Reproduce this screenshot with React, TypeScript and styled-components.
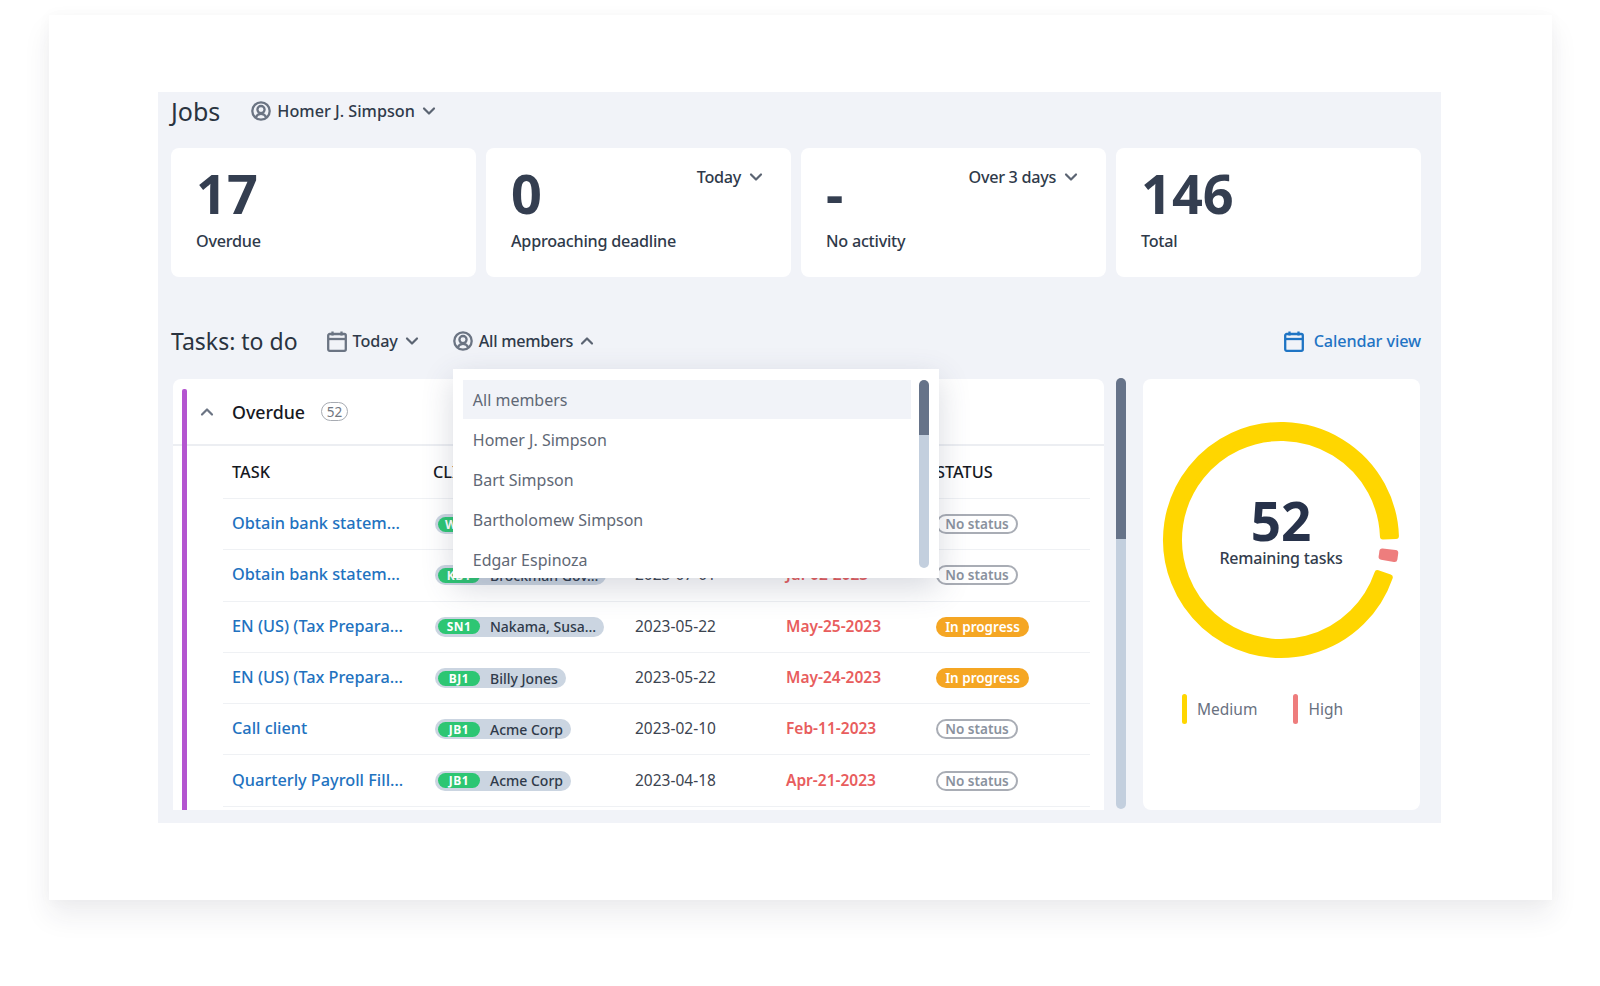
import styled, { createGlobalStyle } from 'styled-components'

const GlobalStyle = createGlobalStyle`
  html, body {
    margin: 0;
    padding: 0;
    background: #fff;
    font-family: "Noto Sans", "Open Sans", sans-serif;
  }
  * { box-sizing: border-box; }
`

const Page = styled.div`
  width: 1600px;
  height: 986px;
  padding: 15px 48px 86px 49px;
  overflow: hidden;
`

const Frame = styled.div`
  height: 885px;
  padding: 77px 111px 0 109px;
  background: #fff;
  box-shadow: 0 16px 26px rgba(40, 44, 60, 0.08), 0 0 14px rgba(40, 44, 60, 0.03);
`

const Panel = styled.div`
  height: 731px;
  padding: 0 20px 13px 13px;
  background: #f1f3f8;
  display: flex;
  flex-direction: column;
`

const JobsHeader = styled.div`
  height: 38px;
  margin-bottom: 18px;
  display: flex;
  align-items: center;
`

const Title = styled.h2<{ $size: number; $gap: number }>`
  margin: 0 ${p => p.$gap}px 0 0;
  font-size: ${p => p.$size}px;
  font-weight: 400;
  color: #2a3340;
`

const Filter = styled.div<{ $offset?: number; $spacing?: number }>`
  position: relative;
  height: 32px;
  margin-left: ${p => p.$offset ?? 0}px;
  display: flex;
  align-items: center;
  gap: 6px;
  font-size: 16.2px;
  letter-spacing: ${p => p.$spacing ?? 0}px;
  font-weight: 500;
  color: #2f3a4a;
  white-space: nowrap;
`

const StatRow = styled.div`
  display: grid;
  grid-template-columns: repeat(4, 305px);
  gap: 10px;
  height: 129px;
`

const StatCard = styled.div`
  position: relative;
  padding: 12px 25px 0;
  background: #fff;
  border-radius: 8px;
`

const StatValue = styled.div`
  height: 66px;
  font-size: 54px;
  line-height: 66px;
  font-weight: 700;
  color: #343e50;
`

const StatLabel = styled.div`
  margin-top: 3px;
  font-size: 16.2px;
  letter-spacing: -0.25px;
  line-height: 24px;
  font-weight: 500;
  color: #2f3a4a;
`

const StatSelect = styled.div`
  position: absolute;
  top: 17px;
  right: 27px;
  display: flex;
  align-items: center;
  gap: 7px;
  font-size: 16.2px;
  letter-spacing: -0.3px;
  line-height: 24px;
  font-weight: 500;
  color: #2f3a4a;
`

const TasksHeader = styled.div`
  height: 32px;
  margin: 48px 0 22px;
  display: flex;
  align-items: center;
`

const CalendarLink = styled.div`
  margin-left: auto;
  display: flex;
  align-items: center;
  gap: 10px;
  font-size: 16.2px;
  letter-spacing: -0.1px;
  font-weight: 500;
  color: #1f74c4;
`

const Content = styled.div`
  flex: 1;
  padding-left: 2px;
  display: flex;
`

const TableCard = styled.div`
  position: relative;
  width: 931px;
  height: 431px;
  background: #fff;
  border-radius: 8px 8px 0 0;
  overflow: hidden;
`

const AccentBar = styled.div`
  position: absolute;
  left: 9px;
  top: 10px;
  bottom: 0;
  width: 5px;
  background: #b455d0;
  border-radius: 2px 2px 0 0;
`

const SectionHead = styled.div`
  height: 67px;
  padding-left: 26px;
  display: flex;
  align-items: center;
  border-bottom: 2px solid #eceef2;
`

const SectionName = styled.div`
  margin-left: 17px;
  font-size: 17.8px;
  font-weight: 500;
  color: #16191f;
`

const CountBadge = styled.div`
  margin-left: 16px;
  width: 27px;
  height: 19px;
  border: 1px solid #a7abb2;
  border-radius: 10px;
  display: flex;
  align-items: center;
  justify-content: center;
  font-size: 13.5px;
  color: #6f7681;
`

const Table = styled.div`
  padding: 0 14px 0 50px;
`

const Row = styled.div<{ $head?: boolean }>`
  height: ${p => (p.$head ? '53px' : '51.3px')};
  padding-left: 9px;
  display: grid;
  grid-template-columns: 201px 202px 151px 150px 1fr;
  align-items: center;
  border-bottom: 1.5px solid #eff1f4;
`

const HeadCell = styled.div`
  font-size: 16.3px;
  font-weight: 500;
  color: #16191f;
`

const TaskLink = styled.div`
  padding-bottom: 2px;
  font-size: 16.3px;
  font-weight: 500;
  color: #2272bf;
  white-space: nowrap;
`

const ClientPill = styled.div`
  justify-self: start;
  margin-left: 2px;
  height: 20px;
  padding: 0 8px 0 3px;
  display: flex;
  align-items: center;
  gap: 10px;
  background: #cbd5e1;
  border-radius: 10px;
  font-size: 14px;
  font-weight: 500;
  color: #2f3a4a;
  white-space: nowrap;
`

const ClientTag = styled.span`
  width: 42px;
  height: 15px;
  display: flex;
  align-items: center;
  justify-content: center;
  background: #2dc673;
  border-radius: 8px;
  font-size: 12px;
  letter-spacing: 0.5px;
  font-weight: 700;
  color: #fff;
`

const DateCell = styled.div`
  padding-bottom: 2px;
  font-size: 15.5px;
  color: #3c4450;
`

const DueCell = styled.div`
  padding-bottom: 2px;
  font-size: 15.5px;
  font-weight: 600;
  color: #e85d5d;
`

const StatusPill = styled.div<{ $active?: boolean }>`
  justify-self: start;
  width: ${p => (p.$active ? '93px' : '82px')};
  height: 20px;
  display: flex;
  align-items: center;
  justify-content: center;
  border-radius: 10px;
  border: ${p => (p.$active ? 'none' : '2px solid #a9adb5')};
  background: ${p => (p.$active ? '#f5a623' : 'transparent')};
  font-size: 13.5px;
  font-weight: 600;
  color: ${p => (p.$active ? '#fff' : '#8a929e')};
`

const Track = styled.div<{ $height: number; $thumb: number }>`
  width: 10px;
  height: ${p => p.$height}px;
  flex-shrink: 0;
  border-radius: 5px;
  background: linear-gradient(
    #667389 ${p => p.$thumb}px,
    #c3cfde ${p => p.$thumb}px
  );
`

const MainScroll = styled.div`
  margin: -1px 17px 0 12px;
`

const ChartCard = styled.div`
  width: 277px;
  height: 431px;
  padding-top: 42px;
  background: #fff;
  border-radius: 8px;
  display: flex;
  flex-direction: column;
  align-items: center;
`

const Ring = styled.div`
  position: relative;
  width: 238px;
  height: 238px;
  margin-left: -1px;
`

const RingCenter = styled.div`
  position: absolute;
  inset: 74px 0 0;
  display: flex;
  flex-direction: column;
  align-items: center;
`

const RingValue = styled.div`
  font-size: 53px;
  line-height: 51px;
  font-weight: 700;
  color: #27324a;
`

const RingLabel = styled.div`
  font-size: 16px;
  letter-spacing: -0.2px;
  line-height: 24px;
  font-weight: 500;
  color: #333d4d;
`

const Legend = styled.div`
  margin-top: 35px;
  align-self: flex-start;
  padding-left: 39px;
  display: flex;
  gap: 36px;
`

const LegendItem = styled.div<{ $color: string }>`
  display: flex;
  align-items: center;
  gap: 10px;
  font-size: 15.5px;
  color: #69717f;

  &::before {
    content: '';
    width: 5px;
    height: 30px;
    border-radius: 3px;
    background: ${p => p.$color};
  }
`

const Dropdown = styled.div`
  position: absolute;
  left: 0;
  top: calc(100% + 12px);
  z-index: 5;
  width: 486px;
  height: 209px;
  padding: 11px 10px 10px;
  display: flex;
  gap: 8px;
  background: #fff;
  box-shadow: 0 10px 30px rgba(60, 70, 100, 0.2);
`

const OptionList = styled.div`
  width: 449px;
  height: 190px;
  overflow: hidden;
`

const Option = styled.div<{ $selected?: boolean }>`
  height: 39px;
  margin-bottom: 1px;
  padding-left: 10px;
  display: flex;
  align-items: center;
  font-size: 16px;
  letter-spacing: 0;
  font-weight: 400;
  color: #5f6875;
  background: ${p => (p.$selected ? '#f1f3f8' : 'transparent')};
`

const Chevron = ({ up, color = '#5b6472', size = 16 }: { up?: boolean; color?: string; size?: number }) => (
  <svg width={size} height={size} viewBox="0 0 16 16" fill="none">
    <path
      d={up ? 'M3 10.5 8 5.5l5 5' : 'M3 5.5l5 5 5-5'}
      stroke={color}
      strokeWidth="2.2"
      strokeLinecap="round"
      strokeLinejoin="round"
    />
  </svg>
)

const MemberIcon = () => (
  <svg width="20" height="20" viewBox="0 0 20 20" fill="none" stroke="#6b7483" strokeWidth="2.3">
    <circle cx="10" cy="10" r="8.7" />
    <circle cx="10" cy="8.6" r="3.6" />
    <path d="M4.6 16.4c1.2-2.4 3-3.6 5.4-3.6s4.2 1.2 5.4 3.6" />
  </svg>
)

const CalendarIcon = ({ color }: { color: string }) => (
  <svg width="20" height="21" viewBox="0 0 20 21" fill="none" stroke={color} strokeWidth="2.3">
    <rect x="1.2" y="3" width="17.6" height="16.8" rx="1.5" />
    <path d="M1 8h18" />
    <path d="M5.5 0.5v4M14.5 0.5v4" />
  </svg>
)

// annular sector, rounded off with a round-joined stroke
const polar = (r: number, deg: number) => {
  const a = (deg * Math.PI) / 180
  return `${(119 + r * Math.cos(a)).toFixed(2)} ${(119 + r * Math.sin(a)).toFixed(2)}`
}

const sector = (from: number, to: number) => {
  const large = to - from > 180 ? 1 : 0
  const outer = 115
  const inner = 102
  return `M${polar(outer, from)} A${outer} ${outer} 0 ${large} 1 ${polar(outer, to)} L${polar(inner, to)} A${inner} ${inner} 0 ${large} 0 ${polar(inner, from)} Z`
}

const RingArc = ({ from, to, color }: { from: number; to: number; color: string }) => (
  <path d={sector(from, to)} fill={color} stroke={color} strokeWidth="6" strokeLinejoin="round" />
)

type TTask = {
  name: string
  tag: string
  client: string
  date: string
  due: string
  active?: boolean
}

const tasks: TTask[] = [
  { name: 'Obtain bank statem…', tag: 'WB1', client: 'Wayne, Bruce', date: '2023-06-28', due: 'Jun-30-2023' },
  { name: 'Obtain bank statem…', tag: 'KB1', client: 'Brockman Gov…', date: '2023-07-01', due: 'Jul-02-2023' },
  { name: 'EN (US) (Tax Prepara…', tag: 'SN1', client: 'Nakama, Susa…', date: '2023-05-22', due: 'May-25-2023', active: true },
  { name: 'EN (US) (Tax Prepara…', tag: 'BJ1', client: 'Billy Jones', date: '2023-05-22', due: 'May-24-2023', active: true },
  { name: 'Call client', tag: 'JB1', client: 'Acme Corp', date: '2023-02-10', due: 'Feb-11-2023' },
  { name: 'Quarterly Payroll Fill…', tag: 'JB1', client: 'Acme Corp', date: '2023-04-18', due: 'Apr-21-2023' },
]

const members = ['All members', 'Homer J. Simpson', 'Bart Simpson', 'Bartholomew Simpson', 'Edgar Espinoza']

const stats = [
  { value: '17', label: 'Overdue' },
  { value: '0', label: 'Approaching deadline', select: 'Today' },
  { value: '-', label: 'No activity', select: 'Over 3 days' },
  { value: '146', label: 'Total' },
]

const App = () => {
  return (
    <Page>
      <GlobalStyle />
      <Frame>
        <Panel>
          <JobsHeader>
            <Title $size={25} $gap={31}>Jobs</Title>
            <Filter>
              <MemberIcon />
              Homer J. Simpson
              <Chevron />
            </Filter>
          </JobsHeader>

          <StatRow>
            {stats.map(stat => (
              <StatCard key={stat.label}>
                <StatValue>{stat.value}</StatValue>
                <StatLabel>{stat.label}</StatLabel>
                {stat.select && (
                  <StatSelect>
                    {stat.select}
                    <Chevron />
                  </StatSelect>
                )}
              </StatCard>
            ))}
          </StatRow>

          <TasksHeader>
            <Title $size={23} $gap={29}>Tasks: to do</Title>
            <Filter $spacing={-0.1}>
              <CalendarIcon color="#6b7483" />
              Today
              <Chevron />
            </Filter>
            <Filter $offset={33} $spacing={-0.3}>
              <MemberIcon />
              All members
              <Chevron up />
              <Dropdown>
                <OptionList>
                  {members.map((member, index) => (
                    <Option key={member} $selected={index === 0}>
                      {member}
                    </Option>
                  ))}
                </OptionList>
                <Track $height={188} $thumb={55} />
              </Dropdown>
            </Filter>
            <CalendarLink>
              <CalendarIcon color="#1f74c4" />
              Calendar view
            </CalendarLink>
          </TasksHeader>

          <Content>
            <TableCard>
              <AccentBar />
              <SectionHead>
                <Chevron up color="#6b7483" />
                <SectionName>Overdue</SectionName>
                <CountBadge>52</CountBadge>
              </SectionHead>
              <Table>
                <Row $head>
                  <HeadCell>TASK</HeadCell>
                  <HeadCell>CLIENT</HeadCell>
                  <HeadCell>START</HeadCell>
                  <HeadCell>DUE</HeadCell>
                  <HeadCell>STATUS</HeadCell>
                </Row>
                {tasks.map((task, index) => (
                  <Row key={index}>
                    <TaskLink>{task.name}</TaskLink>
                    <ClientPill>
                      <ClientTag>{task.tag}</ClientTag>
                      {task.client}
                    </ClientPill>
                    <DateCell>{task.date}</DateCell>
                    <DueCell>{task.due}</DueCell>
                    <StatusPill $active={task.active}>{task.active ? 'In progress' : 'No status'}</StatusPill>
                  </Row>
                ))}
              </Table>
            </TableCard>

            <MainScroll>
              <Track $height={431} $thumb={161} />
            </MainScroll>

            <ChartCard>
              <Ring>
                <svg width="238" height="238" viewBox="0 0 238 238">
                  <RingArc from={19} to={358} color="#ffd600" />
                  <RingArc from={6.5} to={9.5} color="#ee7d7d" />
                </svg>
                <RingCenter>
                  <RingValue>52</RingValue>
                  <RingLabel>Remaining tasks</RingLabel>
                </RingCenter>
              </Ring>
              <Legend>
                <LegendItem $color="#ffd600">Medium</LegendItem>
                <LegendItem $color="#ee7d7d">High</LegendItem>
              </Legend>
            </ChartCard>
          </Content>
        </Panel>
      </Frame>
    </Page>
  )
}

export default App
